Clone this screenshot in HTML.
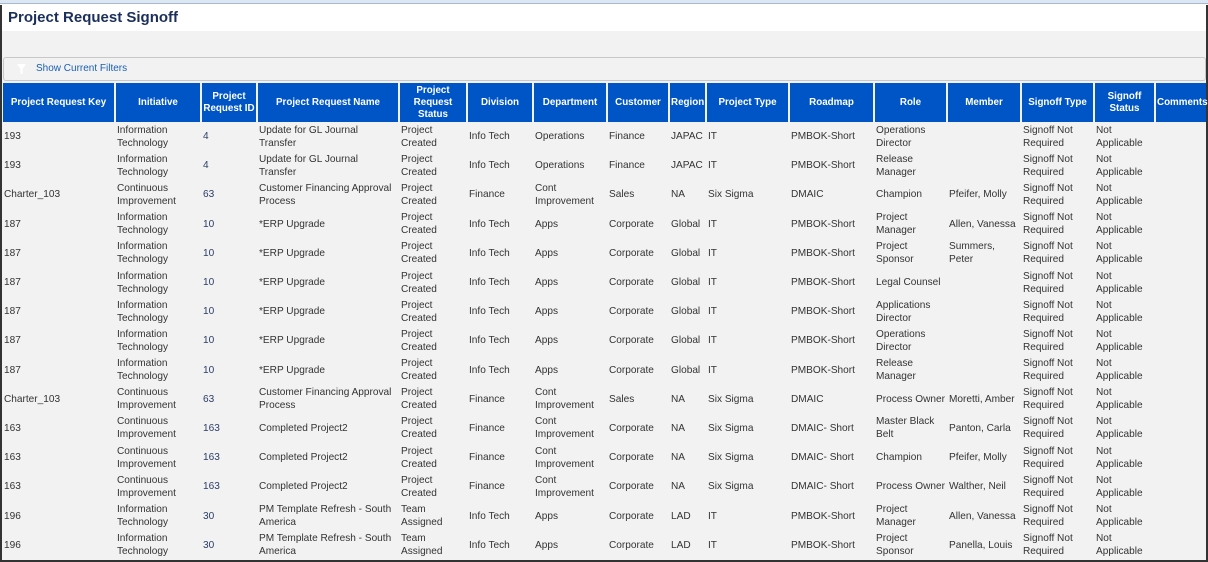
<!DOCTYPE html>
<html><head><meta charset="utf-8"><style>
*{margin:0;padding:0;box-sizing:border-box}
body{width:1208px;height:562px;overflow:hidden;background:#fff;font-family:"Liberation Sans",Arial,sans-serif;position:relative}
.top{position:absolute;left:0;top:0;width:1208px;height:4px;background:#dce7f4;border-bottom:1px solid #a9b8cc}
.frame{position:absolute;left:0;top:5px;width:1208px;height:557px;border-left:2px solid #333;border-right:2px solid #333;border-bottom:2px solid #333}
.title{position:absolute;left:8px;top:9px;font-size:15px;font-weight:bold;color:#1b2f5c}
.gray{position:absolute;left:2px;top:31px;width:1204px;height:531px;background:#f2f2f2}
.filt{position:absolute;left:3px;top:57px;width:1203px;height:24px;border:1px solid #c8c8c8;border-radius:3px;background:#f2f2f2}
.filt span{position:absolute;left:32px;top:5px;font-size:10px;color:#1a5fb4}
.filt i{position:absolute;left:13px;top:6px;width:9px;height:10px;background:#fff;clip-path:polygon(0 0,100% 0,62% 50%,62% 100%,38% 100%,38% 50%)}
table{position:absolute;left:1px;top:83px;border-collapse:separate;border-spacing:2px 0;table-layout:fixed;width:1207px;font-size:10.1px;color:#333}
th{background:#0055c6;color:#fff;font-weight:bold;font-size:9.8px;height:39px;text-align:center;line-height:12px;padding:0 1px;white-space:normal}
td{height:29.2px;line-height:13px;padding:0 1px;vertical-align:middle;overflow:hidden}
td.b{color:#2a3d66}
</style></head><body>
<div class="top"></div>
<div class="gray"></div>
<div class="frame"></div>
<div class="title">Project Request Signoff</div>
<div class="filt"><i></i><span>Show Current Filters</span></div>
<table>
<colgroup><col style="width:111px"><col style="width:84px"><col style="width:54px"><col style="width:140px"><col style="width:66px"><col style="width:64px"><col style="width:72px"><col style="width:60px"><col style="width:35px"><col style="width:81px"><col style="width:83px"><col style="width:71px"><col style="width:72px"><col style="width:71px"><col style="width:59px"><col style="width:50px"></colgroup>
<tr><th>Project Request Key</th><th>Initiative</th><th>Project Request&nbsp;ID</th><th>Project Request Name</th><th>Project Request Status</th><th>Division</th><th>Department</th><th>Customer</th><th>Region</th><th>Project Type</th><th>Roadmap</th><th>Role</th><th>Member</th><th>Signoff Type</th><th>Signoff Status</th><th>Comments</th></tr>
<tr><td>193</td><td>Information Technology</td><td class="b">4</td><td>Update for GL Journal Transfer</td><td>Project Created</td><td>Info Tech</td><td>Operations</td><td>Finance</td><td>JAPAC</td><td>IT</td><td>PMBOK-Short</td><td>Operations Director</td><td></td><td>Signoff Not Required</td><td>Not Applicable</td><td></td></tr>
<tr><td>193</td><td>Information Technology</td><td class="b">4</td><td>Update for GL Journal Transfer</td><td>Project Created</td><td>Info Tech</td><td>Operations</td><td>Finance</td><td>JAPAC</td><td>IT</td><td>PMBOK-Short</td><td>Release Manager</td><td></td><td>Signoff Not Required</td><td>Not Applicable</td><td></td></tr>
<tr><td>Charter_103</td><td>Continuous Improvement</td><td class="b">63</td><td>Customer Financing Approval Process</td><td>Project Created</td><td>Finance</td><td>Cont Improvement</td><td>Sales</td><td>NA</td><td>Six Sigma</td><td>DMAIC</td><td>Champion</td><td>Pfeifer, Molly</td><td>Signoff Not Required</td><td>Not Applicable</td><td></td></tr>
<tr><td>187</td><td>Information Technology</td><td class="b">10</td><td>*ERP Upgrade</td><td>Project Created</td><td>Info Tech</td><td>Apps</td><td>Corporate</td><td>Global</td><td>IT</td><td>PMBOK-Short</td><td>Project Manager</td><td>Allen, Vanessa</td><td>Signoff Not Required</td><td>Not Applicable</td><td></td></tr>
<tr><td>187</td><td>Information Technology</td><td class="b">10</td><td>*ERP Upgrade</td><td>Project Created</td><td>Info Tech</td><td>Apps</td><td>Corporate</td><td>Global</td><td>IT</td><td>PMBOK-Short</td><td>Project Sponsor</td><td>Summers, Peter</td><td>Signoff Not Required</td><td>Not Applicable</td><td></td></tr>
<tr><td>187</td><td>Information Technology</td><td class="b">10</td><td>*ERP Upgrade</td><td>Project Created</td><td>Info Tech</td><td>Apps</td><td>Corporate</td><td>Global</td><td>IT</td><td>PMBOK-Short</td><td>Legal Counsel</td><td></td><td>Signoff Not Required</td><td>Not Applicable</td><td></td></tr>
<tr><td>187</td><td>Information Technology</td><td class="b">10</td><td>*ERP Upgrade</td><td>Project Created</td><td>Info Tech</td><td>Apps</td><td>Corporate</td><td>Global</td><td>IT</td><td>PMBOK-Short</td><td>Applications Director</td><td></td><td>Signoff Not Required</td><td>Not Applicable</td><td></td></tr>
<tr><td>187</td><td>Information Technology</td><td class="b">10</td><td>*ERP Upgrade</td><td>Project Created</td><td>Info Tech</td><td>Apps</td><td>Corporate</td><td>Global</td><td>IT</td><td>PMBOK-Short</td><td>Operations Director</td><td></td><td>Signoff Not Required</td><td>Not Applicable</td><td></td></tr>
<tr><td>187</td><td>Information Technology</td><td class="b">10</td><td>*ERP Upgrade</td><td>Project Created</td><td>Info Tech</td><td>Apps</td><td>Corporate</td><td>Global</td><td>IT</td><td>PMBOK-Short</td><td>Release Manager</td><td></td><td>Signoff Not Required</td><td>Not Applicable</td><td></td></tr>
<tr><td>Charter_103</td><td>Continuous Improvement</td><td class="b">63</td><td>Customer Financing Approval Process</td><td>Project Created</td><td>Finance</td><td>Cont Improvement</td><td>Sales</td><td>NA</td><td>Six Sigma</td><td>DMAIC</td><td style="white-space:nowrap">Process Owner</td><td>Moretti, Amber</td><td>Signoff Not Required</td><td>Not Applicable</td><td></td></tr>
<tr><td>163</td><td>Continuous Improvement</td><td class="b">163</td><td>Completed Project2</td><td>Project Created</td><td>Finance</td><td>Cont Improvement</td><td>Corporate</td><td>NA</td><td>Six Sigma</td><td>DMAIC- Short</td><td>Master Black Belt</td><td>Panton, Carla</td><td>Signoff Not Required</td><td>Not Applicable</td><td></td></tr>
<tr><td>163</td><td>Continuous Improvement</td><td class="b">163</td><td>Completed Project2</td><td>Project Created</td><td>Finance</td><td>Cont Improvement</td><td>Corporate</td><td>NA</td><td>Six Sigma</td><td>DMAIC- Short</td><td>Champion</td><td>Pfeifer, Molly</td><td>Signoff Not Required</td><td>Not Applicable</td><td></td></tr>
<tr><td>163</td><td>Continuous Improvement</td><td class="b">163</td><td>Completed Project2</td><td>Project Created</td><td>Finance</td><td>Cont Improvement</td><td>Corporate</td><td>NA</td><td>Six Sigma</td><td>DMAIC- Short</td><td style="white-space:nowrap">Process Owner</td><td>Walther, Neil</td><td>Signoff Not Required</td><td>Not Applicable</td><td></td></tr>
<tr><td>196</td><td>Information Technology</td><td class="b">30</td><td>PM Template Refresh - South America</td><td>Team Assigned</td><td>Info Tech</td><td>Apps</td><td>Corporate</td><td>LAD</td><td>IT</td><td>PMBOK-Short</td><td>Project Manager</td><td>Allen, Vanessa</td><td>Signoff Not Required</td><td>Not Applicable</td><td></td></tr>
<tr><td>196</td><td>Information Technology</td><td class="b">30</td><td>PM Template Refresh - South America</td><td>Team Assigned</td><td>Info Tech</td><td>Apps</td><td>Corporate</td><td>LAD</td><td>IT</td><td>PMBOK-Short</td><td>Project Sponsor</td><td>Panella, Louis</td><td>Signoff Not Required</td><td>Not Applicable</td><td></td></tr>
</table>
</body></html>
